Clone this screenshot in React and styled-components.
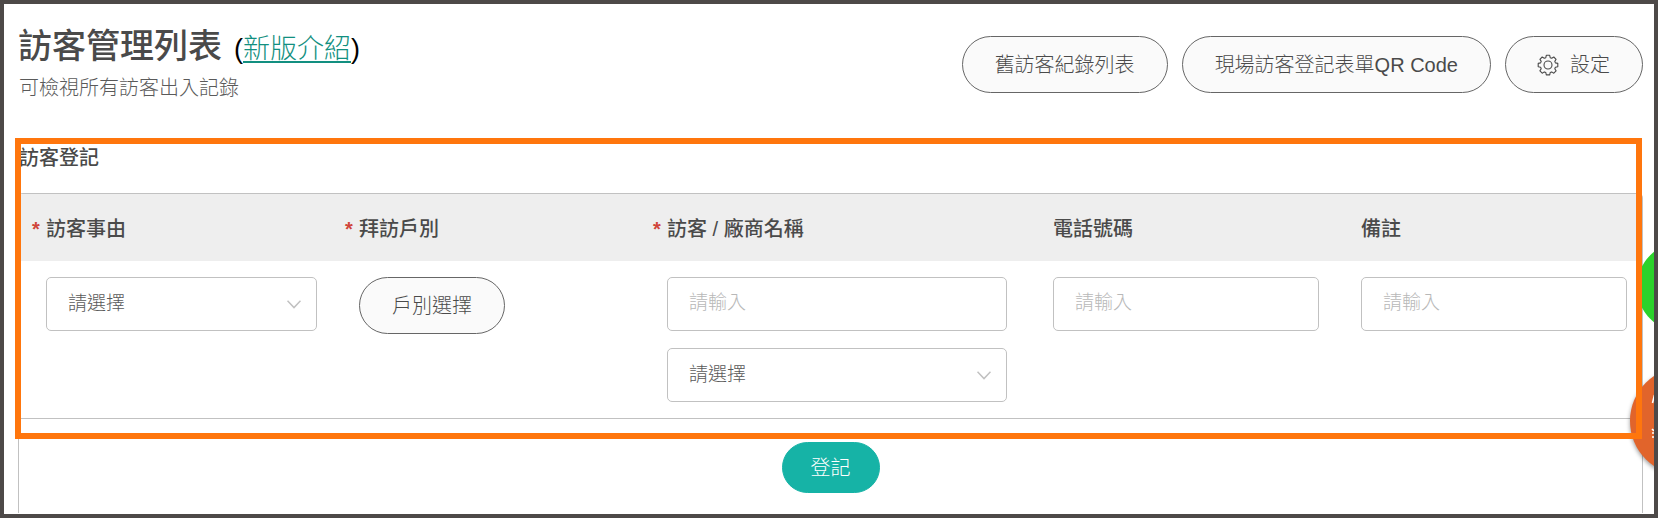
import React, { useState } from "react";
import styled, { createGlobalStyle } from "styled-components";

const GlobalStyle = createGlobalStyle`
  * {
    box-sizing: border-box;
  }
  body {
    margin: 0;
    background: #fff;
  }
  body, button, input, select {
    font-family: "Liberation Sans", "Noto Sans CJK TC", sans-serif;
    font-weight: 300;
  }
`;

const Page = styled.div`
  position: relative;
  min-height: 100vh;
  padding: 20px 11px 0 14px;
  border: 4px solid #4d4948;
  color: #4a4a4a;
  overflow: hidden;
`;

const Header = styled.header`
  display: flex;
  justify-content: space-between;
  align-items: flex-start;
`;

const TitleRow = styled.div`
  display: flex;
  align-items: baseline;
  gap: 12px;
`;

const Title = styled.h1`
  margin: 0;
  font-size: 34px;
  line-height: 44px;
  font-weight: 500;
`;

const Intro = styled.span`
  font-size: 27px;
  line-height: 44px;
  color: #000;
  a {
    color: #128f80;
    text-decoration-thickness: 2px;
    text-underline-offset: 3px;
  }
`;

const Subtitle = styled.p`
  margin: 2px 0 0 1px;
  font-size: 20px;
  line-height: 30px;
  color: #5a5a5a;
`;

const Actions = styled.div`
  display: flex;
  gap: 14px;
  padding-top: 12px;
`;

const PillButton = styled.button`
  display: inline-flex;
  align-items: center;
  justify-content: center;
  gap: 12px;
  height: 57px;
  padding: 0 32px;
  border: 1px solid #666;
  border-radius: 29px;
  background: #fafafa;
  color: #4a4a4a;
  font-size: 20px;
  line-height: 30px;
  white-space: nowrap;
  cursor: pointer;
`;

const SubmitButton = styled(PillButton)`
  height: 51px;
  padding: 0 28px;
  border-color: #16b3a6;
  background: #16b3a6;
  color: #fff;
`;

const Register = styled.section`
  position: relative;
  margin-top: 35px;
`;

/* frame that calls out the registration fields */
const Highlight = styled.div`
  position: absolute;
  z-index: 2;
  top: 0;
  left: -3px;
  right: 1px;
  height: 301px;
  border: 6px solid #ff760d;
  pointer-events: none;
`;

const SectionTitle = styled.h2`
  margin: 0;
  padding: 5px 0 20px 1px;
  font-size: 20px;
  line-height: 30px;
  font-weight: 500;
`;

const Card = styled.form`
  border: 1px solid #c1c1c1;
  border-bottom: 0;
  border-radius: 5px 5px 0 0;
  overflow: hidden;
`;

const Fields = styled.div`
  display: grid;
  grid-template-columns: 313fr 308fr 386fr 308fr 308fr;
  border-bottom: 1px solid #c1c1c1;
`;

const FieldLabel = styled.label`
  display: flex;
  align-items: center;
  height: 67px;
  padding: 2px 0 0 27px;
  background: #eee;
  font-size: 20px;
  line-height: 30px;
  font-weight: 500;
  &::before {
    content: "${({ $required }) => ($required ? "*" : "")}";
    width: 14px;
    margin-left: -14px;
    color: #d0453a;
    font-weight: 700;
  }
`;

const FieldBody = styled.div`
  display: flex;
  flex-direction: column;
  align-items: flex-start;
  gap: 17px;
  padding: 16px ${({ $wide }) => ($wide ? 19 : 15)}px 16px 27px;
`;

const TextInput = styled.input`
  width: 100%;
  height: 54px;
  padding: 0 21px 2px;
  border: 1px solid #c1c1c1;
  border-radius: 5px;
  background: #fff;
  color: #666;
  font-size: 19px;
  &::placeholder {
    color: #b8b8b8;
    opacity: 1;
  }
`;

const SelectWrap = styled.div`
  display: grid;
  width: 100%;
  align-items: center;
  > * {
    grid-area: 1 / 1;
  }
  svg {
    justify-self: end;
    margin-right: 16px;
    pointer-events: none;
  }
`;

const SelectBox = styled.select`
  appearance: none;
  width: 100%;
  height: 54px;
  padding: 0 40px 2px 21px;
  border: 1px solid #c1c1c1;
  border-radius: 5px;
  background: #fff;
  color: #5a5a5a;
  font-size: 19px;
`;

const CardFooter = styled.div`
  display: flex;
  justify-content: center;
  padding: 23px 0 20px;
`;

const FloatButton = styled.button`
  position: absolute;
  z-index: 1;
  top: ${({ $top }) => $top}px;
  right: ${({ $right }) => $right}px;
  width: ${({ $size }) => $size}px;
  height: ${({ $size }) => $size}px;
  padding: 0;
  border: 0;
  border-radius: 50%;
  background: ${({ $color }) => $color};
  box-shadow: ${({ $raised }) => ($raised ? "0 2px 4px rgba(0, 0, 0, 0.4)" : "none")};
  svg {
    display: block;
  }
`;

const GearIcon = () => (
  <svg width="20" height="20" viewBox="0 0 20 20" fill="none" stroke="#4a4a4a" strokeWidth="1.1" overflow="visible">
    <circle cx="10" cy="10" r="4" />
    <path
      d="M8.3.3h3.4l.5 2.4 1.5.6 2.1-1.3 2.3 2.3-1.3 2.1.6 1.5 2.4.5v3.4l-2.4.5-.6 1.5 1.3 2.1-2.3 2.3-2.1-1.3-1.5.6-.5 2.4H8.3l-.5-2.4-1.5-.6-2.1 1.3-2.3-2.3 1.3-2.1-.6-1.5-2.4-.5V8.4l2.4-.5.6-1.5-1.3-2.1L4.2 2l2.1 1.3 1.5-.6z"
      strokeLinejoin="round"
    />
  </svg>
);

const Chevron = () => (
  <svg width="14" height="9" viewBox="0 0 14 9" fill="none" stroke="#c1c1c1" strokeWidth="1.5">
    <path d="M.5.8L7 7.6 13.5.8" />
  </svg>
);

const SupportMark = () => (
  <svg width="108" height="108" viewBox="0 0 108 108" fill="none" stroke="#fff" strokeWidth="1.6">
    <path d="M24.5 28l-2 8M22 62l2 2M22 66h2M22 70h2" />
  </svg>
);

const Select = ({ id, label }) => (
  <SelectWrap>
    <SelectBox id={id} aria-label={label} defaultValue="">
      <option value="">請選擇</option>
    </SelectBox>
    <Chevron />
  </SelectWrap>
);

const Field = ({ id, label, required, wide, children }) => (
  <div>
    <FieldLabel htmlFor={id} $required={required}>
      {label}
    </FieldLabel>
    <FieldBody $wide={wide}>{children}</FieldBody>
  </div>
);

const App = () => {
  const [form, setForm] = useState({ name: "", phone: "", note: "" });

  const bind = (key) => ({
    id: key,
    value: form[key],
    placeholder: "請輸入",
    onChange: (e) => setForm({ ...form, [key]: e.target.value }),
  });

  return (
    <Page>
      <GlobalStyle />
      <Header>
        <div>
          <TitleRow>
            <Title>訪客管理列表</Title>
            <Intro>
              (<a href="#intro">新版介紹</a>)
            </Intro>
          </TitleRow>
          <Subtitle>可檢視所有訪客出入記錄</Subtitle>
        </div>
        <Actions>
          <PillButton type="button">舊訪客紀錄列表</PillButton>
          <PillButton type="button">現場訪客登記表單QR Code</PillButton>
          <PillButton type="button">
            <GearIcon />
            設定
          </PillButton>
        </Actions>
      </Header>

      <Register>
        <Highlight />
        <SectionTitle>訪客登記</SectionTitle>
        <Card onSubmit={(e) => e.preventDefault()}>
          <Fields>
            <Field id="reason" label="訪客事由" required>
              <Select id="reason" />
            </Field>
            <Field id="household" label="拜訪戶別" required>
              <PillButton id="household" type="button">
                戶別選擇
              </PillButton>
            </Field>
            <Field id="name" label="訪客 / 廠商名稱" required wide>
              <TextInput {...bind("name")} />
              <Select id="vendor" label="廠商名稱" />
            </Field>
            <Field id="phone" label="電話號碼">
              <TextInput {...bind("phone")} />
            </Field>
            <Field id="note" label="備註">
              <TextInput {...bind("note")} />
            </Field>
          </Fields>
          <CardFooter>
            <SubmitButton type="submit">登記</SubmitButton>
          </CardFooter>
        </Card>
      </Register>

      <FloatButton type="button" aria-label="LINE" $top={238} $right={-73} $size={90} $color="#2bd22b" />
      <FloatButton type="button" aria-label="客服" $top={363} $right={-84} $size={108} $color="#e1642b" $raised>
        <SupportMark />
      </FloatButton>
    </Page>
  );
};

export default App;
